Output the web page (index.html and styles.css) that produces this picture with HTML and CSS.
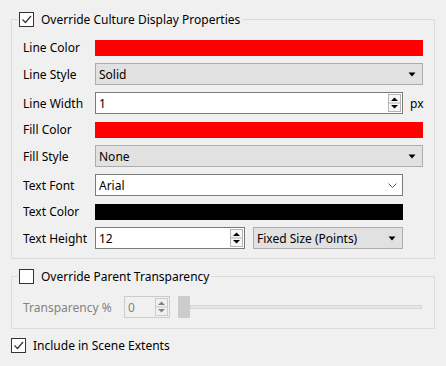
FILE: index.html
```html
<!DOCTYPE html>
<html>

<head>
    <title>Culture Display Properties</title>
    <link rel="stylesheet" href="styles.css">
</head>

<body>
    <div class="panel">
        <fieldset class="group">
            <legend class="check-row">
                <span class="checkbox">
                    <svg width="13" height="13" viewBox="0 0 13 13"><path d="M2.5 6.5l3 3 5.5-6.5" fill="none" stroke="#333" stroke-width="1.2"/></svg>
                </span>
                <span>Override Culture Display Properties</span>
            </legend>

            <div class="props">
                <span class="prop-label">Line Color</span>
                <div class="swatch red wide"></div>

                <span class="prop-label">Line Style</span>
                <div class="dropdown wide">
                    <span class="value">Solid</span>
                    <svg class="arrow" width="8" height="5" viewBox="0 0 8 5"><path d="M0.5 0.5h7L4 4.5z" fill="#000"/></svg>
                </div>

                <span class="prop-label">Line Width</span>
                <div class="field">
                    <span class="value">1</span>
                    <svg class="spin" width="13" height="18" viewBox="0 0 13 18"><rect x="0.5" y="0.5" width="12" height="17" fill="#f7f7f7" stroke="#b4b4b4"/><path d="M0.5 9h12" stroke="#b4b4b4"/><path d="M3 7h7L6.5 3.5z" fill="#000"/><path d="M3 11h7L6.5 14.5z" fill="#000"/></svg>
                </div>
                <span class="unit">px</span>

                <span class="prop-label">Fill Color</span>
                <div class="swatch red wide"></div>

                <span class="prop-label">Fill Style</span>
                <div class="dropdown wide">
                    <span class="value">None</span>
                    <svg class="arrow" width="8" height="5" viewBox="0 0 8 5"><path d="M0.5 0.5h7L4 4.5z" fill="#000"/></svg>
                </div>

                <span class="prop-label">Text Font</span>
                <div class="field combo">
                    <span class="value">Arial</span>
                    <svg class="chevron" width="9" height="5" viewBox="0 0 9 5"><path d="M0.5 0.5l4 4 4-4" fill="none" stroke="#606060"/></svg>
                </div>
                <span></span>

                <span class="prop-label">Text Color</span>
                <div class="swatch black"></div>
                <span></span>

                <span class="prop-label">Text Height</span>
                <div class="pair">
                    <div class="field">
                        <span class="value">12</span>
                        <svg class="spin" width="13" height="18" viewBox="0 0 13 18"><rect x="0.5" y="0.5" width="12" height="17" fill="#f7f7f7" stroke="#b4b4b4"/><path d="M0.5 9h12" stroke="#b4b4b4"/><path d="M3 7h7L6.5 3.5z" fill="#000"/><path d="M3 11h7L6.5 14.5z" fill="#000"/></svg>
                    </div>
                    <div class="dropdown">
                        <span class="value">Fixed Size (Points)</span>
                        <svg class="arrow" width="8" height="5" viewBox="0 0 8 5"><path d="M0.5 0.5h7L4 4.5z" fill="#000"/></svg>
                    </div>
                </div>
                <span></span>
            </div>
        </fieldset>

        <fieldset class="group second">
            <legend class="check-row">
                <span class="checkbox"></span>
                <span>Override Parent Transparency</span>
            </legend>

            <div class="transparency">
                <span class="disabled-label">Transparency %</span>
                <div class="field disabled">
                    <span class="value">0</span>
                    <svg class="spin" width="13" height="18" viewBox="0 0 13 18"><rect x="0.5" y="0.5" width="12" height="17" fill="#f0f0f0" stroke="#cccccc"/><path d="M0.5 9h12" stroke="#cccccc"/><path d="M3 7h7L6.5 3.5z" fill="#838383"/><path d="M3 11h7L6.5 14.5z" fill="#838383"/></svg>
                </div>
                <div class="slider">
                    <div class="handle"></div>
                    <div class="track"></div>
                </div>
            </div>
        </fieldset>

        <div class="check-row extents">
            <span class="checkbox">
                <svg width="13" height="13" viewBox="0 0 13 13"><path d="M2.5 6.5l3 3 5.5-6.5" fill="none" stroke="#333" stroke-width="1.2"/></svg>
            </span>
            <span>Include in Scene Extents</span>
        </div>
    </div>
</body>

</html>
```

FILE: styles.css
```css
body {
    margin: 0;
    background-color: #f0f0f0;
    font-family: "Noto Sans", "Open Sans", sans-serif;
    font-size: 12px;
    color: #000;
}

.panel {
    padding: 11px 11px 0 11px;
}

.group {
    margin: 0;
    padding: 0;
    border: 1px solid #dcdcdc;
    min-inline-size: 0;
}

.group.second {
    margin-top: 9px;
}

.check-row {
    display: flex;
    align-items: center;
    gap: 7px;
    height: 17px;
    line-height: 17px;
}

legend.check-row {
    margin-left: 6px;
    padding: 0 2px 0 1px;
}

.checkbox {
    width: 13px;
    height: 13px;
    border: 1px solid #333;
    background-color: #fff;
    display: flex;
}

.extents {
    margin-top: 8px;
}

.props {
    display: grid;
    grid-template-columns: 72px 1fr 20px;
    row-gap: 7px;
    align-items: center;
    padding: 11px 11px 9px 11px;
}

.wide {
    grid-column: span 2;
}

.swatch {
    height: 16px;
}

.red {
    background-color: #ff0000;
}

.black {
    background-color: #000;
}

.dropdown,
.field {
    height: 22px;
    box-sizing: border-box;
    display: flex;
    align-items: center;
    padding-left: 3px;
}

.dropdown {
    background-color: #e1e1e1;
    border: 1px solid #adadad;
    padding-right: 6px;
}

.field {
    background-color: #fff;
    border: 1px solid #7a7a7a;
    padding-right: 1px;
}

.combo {
    padding-right: 5px;
}

.value {
    flex: 1;
}

.unit {
    padding-left: 7px;
}

.pair {
    display: grid;
    grid-template-columns: 1fr 1fr;
    gap: 8px;
}

.transparency {
    display: flex;
    align-items: center;
    padding: 11px 11px 10px 11px;
}

.disabled-label {
    width: 101px;
    color: #838383;
}

.field.disabled {
    width: 46px;
    background-color: #f0f0f0;
    border-color: #cccccc;
    color: #838383;
}

.slider {
    flex: 1;
    display: flex;
    align-items: center;
    margin-left: 8px;
}

.handle {
    width: 12px;
    height: 22px;
    background-color: #cccccc;
}

.track {
    flex: 1;
    height: 2px;
    background-color: #e7e7e7;
    border: 1px solid #d6d6d6;
    margin-right: 1px;
}
```
